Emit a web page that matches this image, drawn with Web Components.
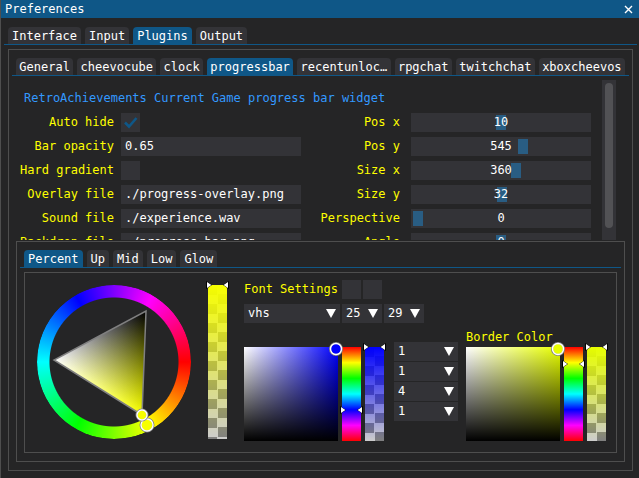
<!DOCTYPE html>
<html lang="en">
<head>
<meta charset="utf-8">
<title>Preferences</title>
<style>
  html, body { height: 100%; margin: 0; }
  body {
    --bg: #252526; --panel: #333337; --line: #4e4e4e; --accent: #0f5787; --label: #ffff00; --grab: #295d83;
    background: var(--bg); color: #fff;
    font: 12px/19px "DejaVu Sans Mono", "Liberation Mono", monospace;
    overflow: hidden;
  }
</style>
</head>
<body>
<pref-window heading="Preferences">
  <ui-tabs items="Interface,Input,Plugins,Output" active="Plugins"></ui-tabs>
  <ui-panel class="fill">
    <ui-tabs class="fit" items="General,cheevocube,clock,progressbar,recentunloc…,rpgchat,twitchchat,xboxcheevos" active="progressbar"></ui-tabs>
    <scroll-area>
      <settings-form></settings-form>
    </scroll-area>
    <ui-panel slot="footer">
      <ui-tabs items="Percent,Up,Mid,Low,Glow" active="Percent"></ui-tabs>
      <ui-panel slot="footer">
        <color-settings></color-settings>
      </ui-panel>
    </ui-panel>
  </ui-panel>
</pref-window>

<script>
const RESET = `
  :host { box-sizing: border-box; }
  * { box-sizing: border-box; }
  button, input, select { font: inherit; color: inherit; border: 0; border-radius: 0; margin: 0; padding: 0; outline: 0; background: var(--panel); }
`;

class Base extends HTMLElement {
  connectedCallback() {
    if (this.shadowRoot) return;
    const root = this.attachShadow({ mode: 'open' });
    root.innerHTML = `<style>${RESET}${this.css()}</style>${this.html()}`;
  }
  at(name, fallback = '') { return this.getAttribute(name) ?? fallback; }
  css() { return ''; }
  html() { return ''; }
}

customElements.define('pref-window', class extends Base {
  css() { return `
    :host { display: flex; flex-direction: column; height: 100vh; border-left: 1px solid var(--line); }
    header { display: flex; align-items: center; justify-content: space-between; height: 18px; background: var(--accent); padding: 0 6px 0 4px; }
    h1 { font: inherit; margin: 0; }
    button { display: flex; background: none; }
    main { flex: 1; min-height: 0; display: flex; flex-direction: column; gap: 4px; padding: 9px 6px 7px 7px; }
    ::slotted(ui-tabs) { margin: 0 -4px; }
  `; }
  html() { return `
    <header><h1>${this.at('heading')}</h1>
      <button aria-label="Close"><svg width="9" height="9" viewBox="0 0 9 9"><path d="M1 1 8 8M8 1 1 8" stroke="#fff" stroke-width="1.4"/></svg></button>
    </header>
    <main><slot></slot></main>`; }
});

customElements.define('ui-tabs', class extends Base {
  css() { return `
    :host { display: block; }
    div { display: flex; gap: 4px; padding: 0 4px; border-bottom: 1px solid var(--accent); }
    button { height: 17px; line-height: 18px; padding: 0 4px; border-radius: 4px 4px 0 0; white-space: nowrap; }
    :host(.fit) button { flex: 1 1 auto; padding: 0 3px; }
    button[aria-selected=true] { background: var(--accent); }
  `; }
  html() { return `<div role="tablist">${this.at('items').split(',').map(t =>
    `<button role="tab" aria-selected="${t === this.at('active')}">${t}</button>`).join('')}</div>`; }
});

customElements.define('ui-panel', class extends Base {
  css() { return `
    :host { display: flex; flex-direction: column; border: 1px solid var(--line); background: var(--bg); padding: 8px 7px; }
    :host(.fill) { flex: 1; min-height: 0; }
    ::slotted(ui-tabs) { margin: 0 -4px 4px; }
    ::slotted(color-settings) { margin-top: -1px; }
  `; }
  html() { return `<slot></slot><slot name="footer"></slot>`; }
});

customElements.define('scroll-area', class extends Base {
  css() { return `
    :host { flex: 1; min-height: 0; display: flex; gap: 11px; overflow: hidden; padding-right: 9px; margin-bottom: 1px; }
    .view { flex: 1; overflow: hidden; padding-top: 9px; }
    .bar { width: 14px; background: var(--panel); padding: 3px; }
    .thumb { height: 94%; border-radius: 4px; background: #525255; }
  `; }
  html() { return `<div class="view"><slot></slot></div><div class="bar"><div class="thumb"></div></div>`; }
});

customElements.define('settings-form', class extends Base {
  css() { return `
    :host { display: block; }
    p { margin: 0 0 5px 8px; color: #3399ff; }
    .grid { display: grid; grid-template-columns: 105px minmax(0, 1fr) 110px minmax(0, 1fr); grid-auto-rows: 19px; row-gap: 5px; }
    label { color: var(--label); text-align: right; white-space: nowrap; padding-right: 7px; }
    label.wide { padding-right: 11px; }
    .r { display: flex; }
    .s, .tick { display: grid; }
    .s > *, .tick > * { grid-area: 1 / 1; }
    input[type=text] { width: 100%; padding: 0 4px; }
    input[type=checkbox] { appearance: none; width: 19px; height: 19px; }
    svg { pointer-events: none; }
    input[type=range] { appearance: none; width: 100%; height: 19px; padding: 2px; }
    input[type=range]::-webkit-slider-thumb { appearance: none; width: 10px; height: 15px; background: var(--grab); border: 0; border-radius: 0; }
    output { z-index: 1; text-align: center; pointer-events: none; }
  `; }
  html() {
    const left = [['Auto hide', true], ['Bar opacity', '0.65'], ['Hard gradient', false],
      ['Overlay file', './progress-overlay.png'], ['Sound file', './experience.wav'], ['Backdrop file', './progress-bar.png']];
    const right = [['Pos x', 10, -2048, 2048], ['Pos y', 545, -2048, 2048], ['Size x', 360, -2048, 2048],
      ['Size y', 32, -2048, 2048], ['Perspective', 0, 0, 100], ['Angle', 0, -360, 360]];
    const field = ([, v], i) => typeof v === 'boolean'
      ? `<span class="tick"><input id="l${i}" type="checkbox" ${v ? 'checked' : ''}>${v ? '<svg width="19" height="19"><path d="M4 9.5 8 13.5 15.5 5" fill="none" stroke="#0f5787" stroke-width="2.6"/></svg>' : ''}</span>`
      : `<input id="l${i}" type="text" value="${v}">`;
    return `<p>RetroAchievements Current Game progress bar widget</p><div class="grid">${left.map((l, i) => {
      const [name, v, min, max] = right[i];
      return `<label for="l${i}">${l[0]}</label><div class="r">${field(l, i)}</div>
        <label class="wide" for="r${i}">${name}</label><div class="s"><input id="r${i}" type="range" min="${min}" max="${max}" value="${v}"><output for="r${i}">${v}</output></div>`;
    }).join('')}</div>`;
  }
});

customElements.define('ui-combo', class extends Base {
  css() { return `
    :host { display: grid; align-items: center; height: 19px; }
    select { appearance: none; grid-area: 1 / 1; width: 100%; height: 19px; padding: 0 4px; }
    svg { grid-area: 1 / 1; justify-self: end; margin-right: 4px; pointer-events: none; }
  `; }
  html() { return `<select aria-label="${this.at('label')}"><option>${this.at('value')}</option></select>
    <svg width="10" height="9" viewBox="0 0 10 9"><path d="M0 0H10L5 9Z" fill="#fff"/></svg>`; }
});

/* Vertical strip with a pair of pointers at the chosen level. */
customElements.define('color-bar', class extends Base {
  css() {
    const fill = this.at('kind') === 'hue'
      ? 'linear-gradient(#f00, #ff0, #0f0, #0ff, #00f, #f0f, #f00)'
      : `linear-gradient(${this.at('color')}, transparent), conic-gradient(#ccc 25%, #808080 0 50%, #ccc 0 75%, #808080 0) 0 0 / 19px 19px`;
    const round = this.at('kind') === 'hue' ? 0 : 4;
    return `
    :host { display: block; position: relative; width: 19px; }
    .fill { height: 100%; background: ${fill}; border-radius: ${round}px ${round}px 0 0; }
    svg { position: absolute; left: -2px; top: calc(${this.at('level', '0')}% - 4px); }
  `; }
  html() { return `<div class="fill"></div>
    <svg width="23" height="8" viewBox="0 0 23 8"><path d="M0 0 6 4 0 8ZM23 0 17 4 23 8Z" fill="#000"/><path d="M1 1 5.4 4 1 7ZM22 1 17.6 4 22 7Z" fill="#fff"/></svg>`; }
});

customElements.define('color-square', class extends Base {
  css() { return `
    :host { display: flex; gap: 4px; height: 94px; }
    .sv { width: 94px; position: relative; background: linear-gradient(to top, #000, transparent), linear-gradient(to right, #fff, ${this.at('color')}); }
    svg { position: absolute; right: -5px; top: -5px; z-index: 1; }
  `; }
  html() { return `<div class="sv"><svg width="14" height="14" viewBox="0 0 14 14"><circle cx="7" cy="7" r="6" fill="${this.at('color')}" stroke="#808080" stroke-width="2"/><circle cx="7" cy="7" r="5.5" fill="none" stroke="#fff" stroke-width="1.4"/></svg></div>
    <color-bar kind="hue" level="${this.at('level')}"></color-bar><color-bar color="${this.at('color')}"></color-bar>`; }
});

/* Hue ring around a triangle blending hue, white and black. */
customElements.define('hue-wheel', class extends Base {
  css() { return `
    :host { display: grid; width: 154px; height: 154px; }
    .ring, svg { grid-area: 1 / 1; }
    .ring { border-radius: 50%; background: conic-gradient(from 90deg, #f00, #ff0, #0f0, #0ff, #00f, #f0f, #f00);
      mask: radial-gradient(circle, transparent 64px, #000 65px); }
    svg { isolation: isolate; overflow: visible; z-index: 1; }
    .add { mix-blend-mode: plus-lighter; }
  `; }
  html() {
    const color = '#f7ff00', angle = 62, c = 77;
    const pt = (deg, r) => [c + r * Math.cos(deg * Math.PI / 180), c + r * Math.sin(deg * Math.PI / 180)].map(Math.round);
    const [h, w, k] = [0, 120, 240].map(d => pt(angle + d, 60));
    const foot = d => pt(angle + d + 180, 30);
    const grad = (id, from, to, col) => `<linearGradient id="${id}" gradientUnits="userSpaceOnUse" x1="${from[0]}" y1="${from[1]}" x2="${to[0]}" y2="${to[1]}"><stop stop-color="#000"/><stop offset="1" stop-color="${col}"/></linearGradient>`;
    const tri = `${h} ${w} ${k}`, knob = pt(angle, 71);
    const dot = ([x, y], r) => `<circle cx="${x}" cy="${y}" r="${r}" fill="${color}" stroke="#808080" stroke-width="2"/><circle cx="${x}" cy="${y}" r="${r - 0.5}" fill="none" stroke="#fff" stroke-width="1.4"/>`;
    return `<div class="ring"></div><svg width="154" height="154" viewBox="0 0 154 154">
      <defs>${grad('a', foot(0), h, color)}${grad('b', foot(120), w, '#fff')}</defs>
      <polygon points="${tri}" fill="url(#a)"/><polygon class="add" points="${tri}" fill="url(#b)"/>
      <polygon points="${tri}" fill="none" stroke="#808080" stroke-width="1.5"/>
      ${dot(knob, 6.5)}${dot(h, 5.5)}</svg>`;
  }
});

customElements.define('color-settings', class extends Base {
  css() { return `
    :host { display: flex; padding: 0 0 3px 5px; }
    hue-wheel { margin: 5px 17px 0 0; }
    .alpha { height: 154px; margin: 5px 17px 0 0; }
    .stack { display: flex; flex-direction: column; gap: 5px; }
    .row { display: flex; gap: 2px; }
    .wide { width: 96px; }
    .small { width: 40px; }
    .name { color: var(--label); white-space: nowrap; }
    input { appearance: none; width: 19px; height: 19px; }
    .lower { display: flex; align-items: flex-start; }
    .one { margin: 19px 10px 0 0; }
    .nums { display: flex; flex-direction: column; gap: 1px; width: 64px; margin: 14px 8px 0 0; }
    .two .name { display: block; }
  `; }
  html() { return `
    <hue-wheel></hue-wheel>
    <color-bar class="alpha" color="#f7ff00"></color-bar>
    <div class="stack">
      <div class="row"><span class="name wide">Font Settings</span><input type="checkbox" aria-label="Bold"><input type="checkbox" aria-label="Italic"></div>
      <div class="row"><ui-combo class="wide" label="Font" value="vhs"></ui-combo><ui-combo class="small" label="Size" value="25"></ui-combo><ui-combo class="small" label="Height" value="29"></ui-combo></div>
      <div class="lower">
        <color-square class="one" color="#0000ff" level="67"></color-square>
        <div class="nums">${[1, 1, 4, 1].map((n, i) => `<ui-combo label="Edge ${i + 1}" value="${n}"></ui-combo>`).join('')}</div>
        <div class="two"><span class="name">Border Color</span><color-square color="#e8ff00" level="18"></color-square></div>
      </div>
    </div>`; }
});
</script>
</body>
</html>
